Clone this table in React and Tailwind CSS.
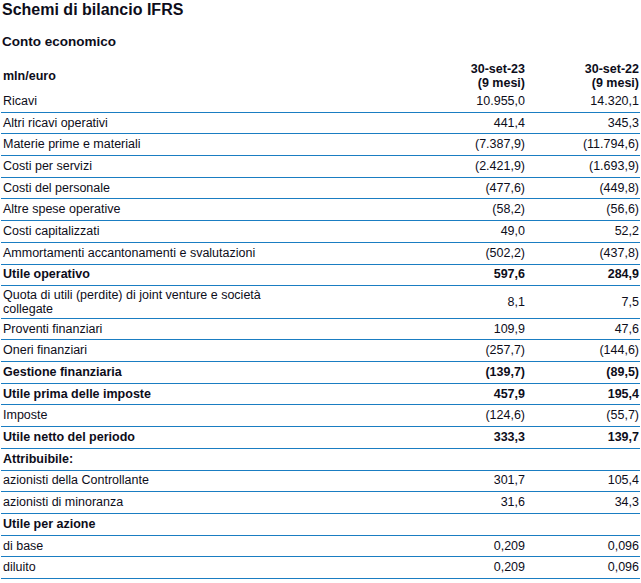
import React from "react";

const rows = [
  { label: "Ricavi", a: "10.955,0", b: "14.320,1" },
  { label: "Altri ricavi operativi", a: "441,4", b: "345,3" },
  { label: "Materie prime e materiali", a: "(7.387,9)", b: "(11.794,6)" },
  { label: "Costi per servizi", a: "(2.421,9)", b: "(1.693,9)" },
  { label: "Costi del personale", a: "(477,6)", b: "(449,8)" },
  { label: "Altre spese operative", a: "(58,2)", b: "(56,6)" },
  { label: "Costi capitalizzati", a: "49,0", b: "52,2" },
  { label: "Ammortamenti accantonamenti e svalutazioni", a: "(502,2)", b: "(437,8)" },
  { label: "Utile operativo", a: "597,6", b: "284,9", bold: true },
  { label: "Quota di utili (perdite) di joint venture e società collegate", a: "8,1", b: "7,5", tall: true },
  { label: "Proventi finanziari", a: "109,9", b: "47,6" },
  { label: "Oneri finanziari", a: "(257,7)", b: "(144,6)" },
  { label: "Gestione finanziaria", a: "(139,7)", b: "(89,5)", bold: true },
  { label: "Utile prima delle imposte", a: "457,9", b: "195,4", bold: true },
  { label: "Imposte", a: "(124,6)", b: "(55,7)" },
  { label: "Utile netto del periodo", a: "333,3", b: "139,7", bold: true },
  { label: "Attribuibile:", a: "", b: "", bold: true },
  { label: "azionisti della Controllante", a: "301,7", b: "105,4" },
  { label: "azionisti di minoranza", a: "31,6", b: "34,3" },
  { label: "Utile per azione", a: "", b: "", bold: true },
  { label: "di base", a: "0,209", b: "0,096" },
  { label: "diluito", a: "0,209", b: "0,096" },
];

function Row({ r }) {
  return (
    <div
      className={
        "flex items-center border-b-[1.5px] border-[#1a7dc2] " +
        (r.tall ? "h-[32.5px] " : "h-[21.7px] ") +
        (r.bold ? "font-bold" : "")
      }
    >
      <div className={"w-[262px] pl-[2px] " + (r.tall ? "leading-[14px]" : "")}>{r.label}</div>
      <div className="flex-1 text-right pr-[2px]">{r.a}</div>
      <div className="w-[113px] text-right pr-[1px]">{r.b}</div>
    </div>
  );
}

export default function App() {
  return (
    <div
      className="w-[641px] h-[583px] bg-white text-[#0d0d1a] text-[12.5px] overflow-hidden"
      style={{ fontFamily: '"Liberation Sans", Arial, sans-serif' }}
    >
      <div className="w-[639px] ml-[1px]">
        <h1 className="text-[16px] font-bold leading-[20px] pl-[1px]">Schemi di bilancio IFRS</h1>
        <h2 className="text-[13.5px] font-bold leading-[16px] pl-[1px] mt-[14px]">Conto economico</h2>
        <div className="flex items-center font-bold h-[32px] mt-[9px] pt-[2px] leading-[14px]">
          <div className="w-[262px] pl-[2px]">mln/euro</div>
          <div className="flex-1 text-right pr-[2px]">
            30-set-23
            <br />
            (9 mesi)
          </div>
          <div className="w-[113px] text-right pr-[1px]">
            30-set-22
            <br />
            (9 mesi)
          </div>
        </div>
        {rows.map((r, i) => (
          <Row key={i} r={r} />
        ))}
      </div>
    </div>
  );
}
